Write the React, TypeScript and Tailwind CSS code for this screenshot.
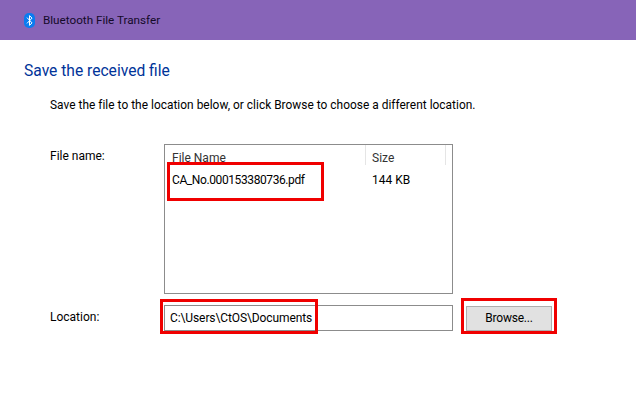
function BluetoothIcon() {
  return (
    <svg width="11" height="15" viewBox="0 0 11 15" className="shrink-0">
      <rect x="0" y="0" width="11" height="15" rx="5" fill="#0a7cf0" />
      <path d="M3 4.6 L8 9.9 L5.5 12.4 V2.6 L8 5.1 L3 10.4" fill="none" stroke="#fff" strokeWidth="1" />
    </svg>
  );
}

function Mark({ className }: { className: string }) {
  return <div className={`absolute border-[3px] border-[#f00000] ${className}`} />;
}

export default function App() {
  return (
    <div className="relative h-[403px] w-[636px] overflow-hidden bg-white font-['Roboto',sans-serif] text-[12px] text-black">
      <div className="flex h-10 items-center gap-[8px] bg-[#8764b8] pl-[24px]">
        <BluetoothIcon />
        <span className="pt-[2px] text-[11.7px] text-[#140a28]">Bluetooth File Transfer</span>
      </div>

      <div className="pl-[24px] pt-[21px]">
        <h1 className="text-[15.6px] leading-[20px] text-[#003399]">Save the received file</h1>
      </div>

      <div className="pl-[50px] pt-[16px]">
        <p className="text-[11.9px] leading-[16px] tracking-[0.025px]">Save the file to the location below, or click Browse to choose a different location.</p>

        <div className="mt-[31px] flex">
          <div className="w-[114px] pt-[4px] leading-[16px]">File name:</div>
          <div className="h-[150px] w-[289px] border border-[#8c8c8c]">
            <div className="flex h-[20px] text-[#333]">
              <div className="w-[201px] border-r border-[#e5e5e5] pl-[7px] pt-[5px] leading-[16px]">File Name</div>
              <div className="w-[80px] border-r border-[#e5e5e5] pl-[6px] pt-[5px] leading-[16px]">Size</div>
            </div>
            <div className="mt-[7px] flex leading-[16px]">
              <div className="w-[201px] pl-[7px] tracking-[-0.4px]">CA_No.000153380736.pdf</div>
              <div className="pl-[6px]">144 KB</div>
            </div>
          </div>
        </div>

        <div className="mt-[11px] flex items-center">
          <div className="w-[114px] pb-[2px] leading-[16px]">Location:</div>
          <div className="flex h-[26px] w-[289px] items-center border border-[#8c8c8c] pl-[5px] tracking-[-0.1px]">C:\Users\CtOS\Documents</div>
          <button className="ml-[13px] h-[25px] w-[86px] border border-[#adadad] bg-[#e1e1e1] text-center tracking-[-0.2px]">Browse...</button>
        </div>
      </div>

      <Mark className="left-[167px] top-[162px] h-[39px] w-[157px]" />
      <Mark className="left-[160px] top-[299px] h-[35px] w-[158px]" />
      <Mark className="left-[461px] top-[298px] h-[36px] w-[96px]" />
    </div>
  );
}
